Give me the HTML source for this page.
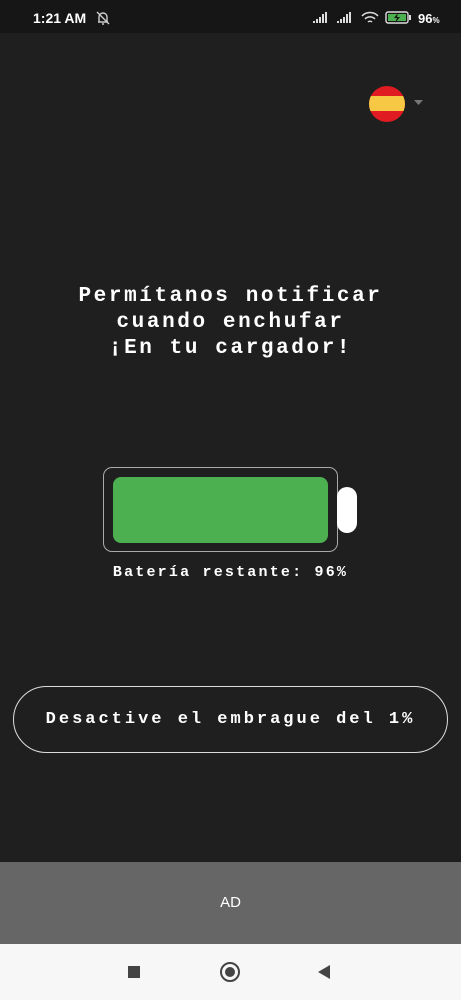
<!DOCTYPE html>
<html><head><meta charset="utf-8"><style>
*{margin:0;padding:0;box-sizing:border-box}
body{width:461px;height:1000px;background:#1f1f1f;position:relative;overflow:hidden;font-family:"Liberation Mono",monospace;color:#fff}
.sb{position:absolute;top:0;left:0;width:461px;height:33px;background:#161616;font-family:"Liberation Sans",sans-serif;font-weight:bold;font-size:14px}
.t{position:absolute;white-space:nowrap}
</style></head><body>
<div class="sb">
<div class="t" style="left:33px;top:10px">1:21 AM</div>
<svg class="t" style="left:95px;top:10px" width="16" height="16" viewBox="0 0 16 16" fill="none" stroke="#ccc" stroke-width="1.4"><path d="M4 12V7a4 4 0 0 1 8 0v5M3 12h10M7 14h2M2 2l12 12"/></svg>
<svg class="t" style="left:313px;top:12px" width="60" height="12"><g fill="#ddd"><rect x="0" y="9" width="2" height="2"/><rect x="3" y="7" width="2" height="4"/><rect x="6" y="5" width="2" height="6"/><rect x="9" y="2" width="2" height="9"/><rect x="12" y="0" width="2" height="11"/><rect x="24" y="9" width="2" height="2"/><rect x="27" y="7" width="2" height="4"/><rect x="30" y="5" width="2" height="6"/><rect x="33" y="2" width="2" height="9"/><rect x="36" y="0" width="2" height="11"/></g></svg>
<svg class="t" style="left:361px;top:11px" width="18" height="14" viewBox="0 0 18 14" fill="none" stroke="#ddd" stroke-width="1.5"><path d="M1 5a11 11 0 0 1 16 0M4 8a7 7 0 0 1 10 0M7 11a3 3 0 0 1 4 0"/></svg>
<svg class="t" style="left:385px;top:11px" width="28" height="14"><rect x="1" y="1" width="22" height="11" rx="2" fill="none" stroke="#ddd" stroke-width="1.4"/><rect x="3" y="3" width="18" height="7" fill="#4caf50"/><rect x="24" y="4" width="2" height="5" fill="#ddd"/><path d="M13 2l-4 5h3l-2 5 5-6h-3z" fill="#161616"/></svg>
<div class="t" style="left:418px;top:11px;font-size:13px">96<span style="font-size:8px">%</span></div>
</div>
<svg class="t" style="left:369px;top:86px" width="60" height="36"><defs><clipPath id="c"><circle cx="18" cy="18" r="18"/></clipPath></defs><g clip-path="url(#c)"><rect width="36" height="36" fill="#e01b22"/><rect y="10" width="36" height="15" fill="#f7c843"/></g><path d="M45 14h9l-4.5 5z" fill="#777"/></svg>
<div class="t" style="left:0;width:461px;top:284px;text-align:center;font-size:21px;letter-spacing:2.6px;line-height:26px;font-weight:bold">Permítanos notificar<br>cuando enchufar<br>¡En tu cargador!</div>
<div class="t" style="left:103px;top:467px;width:235px;height:85px;border:1.5px solid #aaa;border-radius:9px"></div>
<div class="t" style="left:113px;top:477px;width:215px;height:66px;background:#4caf50;border-radius:8px"></div>
<div class="t" style="left:337px;top:487px;width:20px;height:46px;background:#fff;border-radius:10px"></div>
<div class="t" style="left:0;width:461px;top:564px;text-align:center;font-size:15px;letter-spacing:2.2px;font-weight:bold">Batería restante: 96%</div>
<div class="t" style="left:13px;top:686px;width:435px;height:67px;border:1.5px solid #ddd;border-radius:34px;text-align:center;line-height:66px;font-size:17px;letter-spacing:3px;font-weight:bold">Desactive el embrague del 1%</div>
<div class="t" style="left:0;top:862px;width:461px;height:82px;background:#666;text-align:center;line-height:82px;font-family:'Liberation Sans',sans-serif;font-size:15px">AD</div>
<div class="t" style="left:0;top:944px;width:461px;height:56px;background:#f7f7f7"></div>
<div class="t" style="left:128px;top:966px;width:12px;height:12px;background:#444"></div>
<div class="t" style="left:220px;top:962px;width:20px;height:20px;border:2px solid #444;border-radius:50%"></div>
<div class="t" style="left:225px;top:967px;width:10px;height:10px;background:#444;border-radius:50%"></div>
<svg class="t" style="left:316px;top:964px" width="16" height="16"><path d="M14 1v14L2 8z" fill="#444"/></svg>
</body></html>
